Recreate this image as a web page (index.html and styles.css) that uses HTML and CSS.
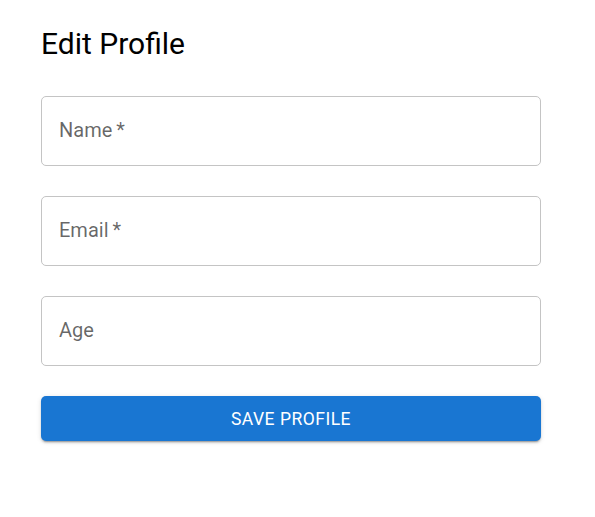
FILE: index.html
```html
<!DOCTYPE html>
<html>
<head>
<meta charset="utf-8">
<link rel="stylesheet" href="styles.css">
</head>
<body>
<div class="page">
  <h1 class="title">Edit Profile</h1>
  <form class="form">
    <div class="field"><span class="label">Name&thinsp;*</span></div>
    <div class="field"><span class="label">Email&thinsp;*</span></div>
    <div class="field"><span class="label">Age</span></div>
    <button type="button" class="btn">SAVE PROFILE</button>
  </form>
</div>
</body>
</html>
```
FILE: styles.css
```css
html, body {
  margin: 0;
  padding: 0;
  background: #fff;
}
body {
  font-family: Roboto, "Liberation Sans", sans-serif;
}
.page {
  padding: 24px 41px;
  width: 500px;
}
.title {
  margin: 0;
  font-size: 30px;
  font-weight: 400;
  line-height: 40px;
  color: #000;
}
.form {
  display: flex;
  flex-direction: column;
  gap: 30px;
  margin-top: 32px;
}
.field {
  box-sizing: border-box;
  height: 70px;
  border: 1px solid #c4c4c4;
  border-radius: 5px;
  display: flex;
  align-items: center;
  padding-left: 17px;
  padding-bottom: 2px;
}
.label {
  font-size: 20px;
  color: rgba(0,0,0,0.6);
}
.btn {
  height: 45px;
  border: none;
  border-radius: 5px;
  background: #1976d2;
  color: #fff;
  font-family: inherit;
  font-size: 17.5px;
  font-weight: 400;
  letter-spacing: 0.5px;
  box-shadow: 0 3px 1px -2px rgba(0,0,0,0.2), 0 2px 2px 0 rgba(0,0,0,0.14), 0 1px 5px 0 rgba(0,0,0,0.12);
}
```
